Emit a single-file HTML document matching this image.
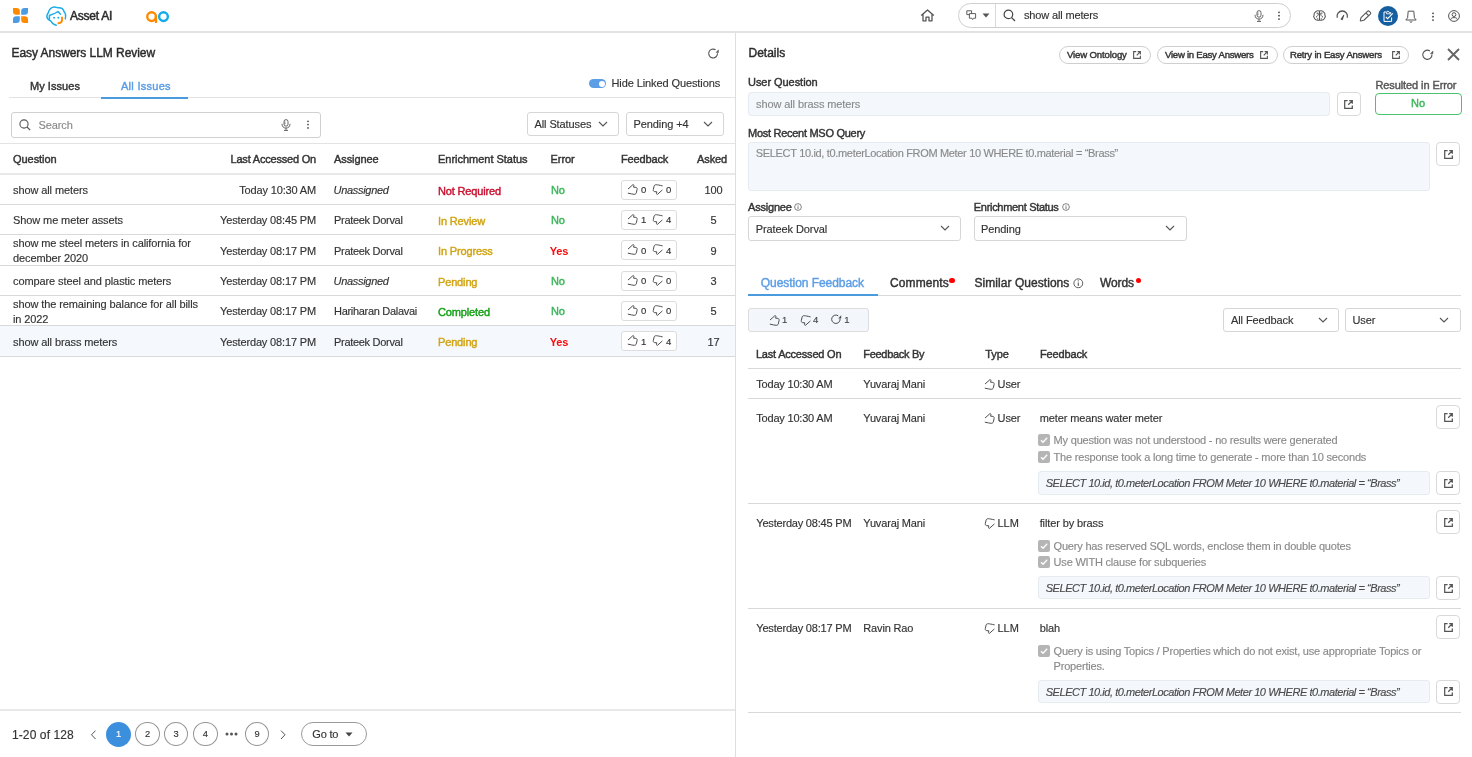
<!DOCTYPE html><html><head><meta charset="utf-8"><style>
html,body{margin:0;padding:0;}
body{width:1472px;height:757px;overflow:hidden;position:relative;background:#fff;font-family:"Liberation Sans",sans-serif;}
.a{position:absolute;}
.t{position:absolute;white-space:nowrap;}
svg.a{overflow:visible;}
#w{position:absolute;left:0;top:0;width:1472px;height:757px;will-change:transform;background:#fff;}
</style></head><body><div id="w">
<svg class="a" style="left:12px;top:7px;" width="17" height="17" viewBox="0 0 17 17" fill="none"><path d="M1 1 H4.5 A3.3 3.3 0 0 1 7.8 4.3 V7.8 H4.3 A3.3 3.3 0 0 1 1 4.5 Z" fill="#ff8a00"/>
<path d="M16 1 H12.5 A3.3 3.3 0 0 0 9.2 4.3 V7.8 H12.7 A3.3 3.3 0 0 0 16 4.5 Z" fill="#4b9ce2"/>
<path d="M1 16 H4.5 A3.3 3.3 0 0 0 7.8 12.7 V9.2 H4.3 A3.3 3.3 0 0 0 1 12.5 Z" fill="#4b9ce2"/>
<path d="M16 16 H12.5 A3.3 3.3 0 0 1 9.2 12.7 V9.2 H12.7 A3.3 3.3 0 0 1 16 12.5 Z" fill="#ff8a00"/></svg>
<svg class="a" style="left:46px;top:6px;" width="20" height="20" viewBox="0 0 20 20" fill="none"><path d="M10.2 19.3 C7.5 18.6 5.8 17 5 15.2 C3.4 14.4 1 13 0.9 10.6 C0.9 8.8 1.4 7.5 2.4 6.6 C2.6 4.6 4.5 1.3 8 0.9 C9.5 0.8 10.8 1.4 11.9 1.8 C14.5 1.6 17.4 2.8 18 5.6 C19.6 7 20 9.5 19.3 12.8" stroke="#1aaeea" stroke-width="1.5" stroke-linecap="round" stroke-linejoin="round"/>
<path d="M3.4 9.4 V13.6 M3.4 9.4 C6.5 8.3 9.5 7.4 12 5.5 L14.3 8.1" stroke="#1aaeea" stroke-width="1.5" stroke-linecap="round" stroke-linejoin="round"/>
<circle cx="8.1" cy="11.7" r="0.95" fill="#1aaeea"/><circle cx="12.3" cy="11.7" r="0.95" fill="#1aaeea"/>
<path d="M16 11.5 V14.2 C16 15.8 14.6 17 12.4 17.2" stroke="#ff8a00" stroke-width="1.9" stroke-linecap="round"/></svg>
<div class="t" style="left:70px;top:9.84px;font-size:12px;line-height:12px;color:#2b2b2b;-webkit-text-stroke:0.42px currentColor;letter-spacing:-0.25px;-webkit-text-stroke:0.5px currentColor;">Asset AI</div>
<svg class="a" style="left:145px;top:10px;" width="26" height="14" viewBox="0 0 26 14" fill="none"><circle cx="6.6" cy="6.6" r="4.35" stroke="#ff8a00" stroke-width="2.4"/><path d="M10.95 6.6 V11.9" stroke="#ff8a00" stroke-width="2.4" stroke-linecap="round"/>
<circle cx="18.5" cy="6.6" r="4.35" stroke="#14abeb" stroke-width="2.4"/></svg>
<svg class="a" style="left:920px;top:9px;" width="15" height="13" viewBox="0 0 15 13" fill="none"><path d="M1.2 6.6 L7.5 1 L13.8 6.6 M3 5.2 V11.8 H6 V8.2 H9 V11.8 H12 V5.2" stroke="#555" stroke-width="1.3" stroke-linejoin="round"/></svg>
<div class="a" style="left:958px;top:3px;width:333px;height:25px;border:1px solid #cfcfcf;border-radius:13px;box-sizing:border-box;background:#fff;"></div>
<div class="a" style="left:995px;top:4px;width:1px;height:23px;background:#d9d9d9;"></div>
<svg class="a" style="left:966px;top:10px;" width="11" height="11" viewBox="0 0 11 11" fill="none"><path d="M0.8 0.8 H5.6 V4 M0.8 0.8 V4.6 H3.4 M3.4 3.6 H9.6 V8.2 H7.6 L6.6 9.6 L5.8 8.2 H3.4 Z" stroke="#555" stroke-width="0.95" stroke-linejoin="round"/></svg>
<svg class="a" style="left:982px;top:13px;" width="8" height="5" viewBox="0 0 8 5" fill="none"><path d="M0.5 0.5 H7.5 L4 4.5 Z" fill="#555"/></svg>
<svg class="a" style="left:1003px;top:9px;" width="13" height="13" viewBox="0 0 13 13" fill="none"><circle cx="5.4" cy="5.4" r="4.3" stroke="#444" stroke-width="1.2"/><path d="M8.6 8.6 L12 12" stroke="#444" stroke-width="1.3"/></svg>
<div class="t" style="left:1024px;top:10.29px;font-size:11px;line-height:11px;color:#333;-webkit-text-stroke:0.15px currentColor;letter-spacing:-0.15px;">show all meters</div>
<svg class="a" style="left:1254px;top:10px;" width="10" height="12" viewBox="0 0 10 12" fill="none"><rect x="3" y="0.6" width="4" height="6.6" rx="2" stroke="#555" stroke-width="0.9"/><path d="M1 4.8 C1 8 2.8 9 5 9 C7.2 9 9 8 9 4.8 M5 9 V11.4 M3 11.4 H7" stroke="#555" stroke-width="0.9"/><path d="M3.2 3 H4.6 M3.2 4.6 H4.6" stroke="#555" stroke-width="0.7"/></svg>
<svg class="a" style="left:1277px;top:11.2px;" width="4" height="9" viewBox="0 0 4 9" fill="none"><circle cx="2" cy="1.3" r="0.9" fill="#444"/><circle cx="2" cy="4.7" r="0.9" fill="#444"/><circle cx="2" cy="8.1" r="0.9" fill="#444"/></svg>
<svg class="a" style="left:1312.8px;top:9.6px;" width="13" height="11.3" viewBox="0 0 15 13" fill="none"><path d="M7.5 1.2 C5.5 0.6 3.6 1 2.6 2.4 C1.4 3.2 1 4.6 1.3 6 C0.6 6.8 0.7 8.4 1.6 9.4 C2.2 11.2 3.8 12 5.6 11.8 L7.5 11.8 L9.4 11.8 C11.2 12 12.8 11.2 13.4 9.4 C14.3 8.4 14.4 6.8 13.7 6 C14 4.6 13.6 3.2 12.4 2.4 C11.4 1 9.5 0.6 7.5 1.2 Z M7.5 1.2 V11.8" stroke="#555" stroke-width="1.25"/>
<path d="M4 3.6 H6 V6.2 M4.2 8.6 C3.6 7.6 4.2 6.6 5.4 6.6 M11 3.6 H9 V6.2 M10.8 8.6 C11.4 7.6 10.8 6.6 9.6 6.6 M5.4 9.6 V11 M9.6 9.6 V11" stroke="#555" stroke-width="1.15"/></svg>
<svg class="a" style="left:1336px;top:10px;" width="13" height="11" viewBox="0 0 13 11" fill="none"><path d="M1.3 7.8 A5.2 5.2 0 1 1 11.2 7.8" stroke="#555" stroke-width="1.3"/><path d="M4.9 9.2 L7.9 4.9 L6.4 9.8 Z" fill="#444" stroke="#444" stroke-width="0.7" stroke-linejoin="round"/></svg>
<svg class="a" style="left:1358.6px;top:9.6px;" width="12.6" height="11.7" viewBox="0 0 14 13" fill="none"><path d="M1.4 11.8 L2.2 8.6 L9.4 1.4 C10 0.8 10.8 0.8 11.4 1.4 L12.6 2.6 C13.2 3.2 13.2 4 12.6 4.6 L5.4 11.4 L2 12.2 Z M7.6 3.2 L10.8 6.4" stroke="#555" stroke-width="1.2" stroke-linejoin="round"/></svg>
<div class="a" style="left:1378px;top:5.5px;width:20px;height:20px;background:#155e9f;border-radius:50%;"></div>
<svg class="a" style="left:1383px;top:9.5px;" width="11" height="12" viewBox="0 0 11 12" fill="none"><path d="M3.6 2 H1 V11.4 H8.6 V7.5" stroke="#fff" stroke-width="1"/><path d="M3.6 2.6 C3.6 0.8 6.2 0.8 6.2 2.6 H7.8 V3.8 H3.6 Z" stroke="#fff" stroke-width="0.9"/><path d="M2.8 6.8 L4.6 8.6 L9.8 3.4" stroke="#fff" stroke-width="1.1"/></svg>
<svg class="a" style="left:1405px;top:10px;" width="12" height="13" viewBox="0 0 12 13" fill="none"><path d="M3.2 1.2 H8.8 L9.4 7.8 L11.2 10 H0.8 L2.6 7.8 Z M4.6 11.4 L6 12.4 L7.4 11.4" stroke="#555" stroke-width="1" stroke-linejoin="round"/></svg>
<svg class="a" style="left:1431px;top:11.5px;" width="4" height="9" viewBox="0 0 4 9" fill="none"><circle cx="2" cy="1.3" r="0.9" fill="#444"/><circle cx="2" cy="4.7" r="0.9" fill="#444"/><circle cx="2" cy="8.1" r="0.9" fill="#444"/></svg>
<svg class="a" style="left:1448px;top:9.5px;" width="12" height="12" viewBox="0 0 12 12" fill="none"><circle cx="6" cy="6" r="5.4" stroke="#555" stroke-width="1"/><circle cx="6" cy="4.6" r="1.9" stroke="#555" stroke-width="1"/><path d="M2.6 9.8 C3 8 4.2 7.6 6 7.6 C7.8 7.6 9 8 9.4 9.8" stroke="#555" stroke-width="1"/></svg>
<div class="a" style="left:0px;top:31px;width:1472px;height:2px;background:#e2e2e2;"></div>
<div class="a" style="left:735px;top:33px;width:1px;height:724px;background:#dedede;"></div>
<div class="t" style="left:11.5px;top:47.34px;font-size:12px;line-height:12px;color:#2b2b2b;-webkit-text-stroke:0.42px currentColor;letter-spacing:-0.05px;">Easy Answers LLM Review</div>
<svg class="a" style="left:708px;top:48px;" width="11" height="11" viewBox="0 0 11 11" fill="none"><path d="M7.6 1.9 A4.4 4.4 0 1 0 9.5 5.2" stroke="#555" stroke-width="1.1"/><path d="M10.5 1.8 V4.5 H8 Z" fill="#555" stroke="#555" stroke-width="0.4" stroke-linejoin="round"/></svg>
<div class="t" style="left:30px;top:80.79px;font-size:11px;line-height:11px;color:#333;-webkit-text-stroke:0.42px currentColor;letter-spacing:0.05px;">My Issues</div>
<div class="t" style="left:121px;top:80.79px;font-size:11px;line-height:11px;color:#5b9de6;-webkit-text-stroke:0.42px currentColor;letter-spacing:0.28px;">All Issues</div>
<div class="a" style="left:9px;top:97px;width:726px;height:1px;background:#e3e3e3;"></div>
<div class="a" style="left:101px;top:97px;width:87px;height:2px;background:#4a9bde;"></div>
<div class="a" style="left:589px;top:79px;width:17px;height:9px;background:#5b9ee6;border-radius:5px;"></div>
<div class="a" style="left:598.5px;top:80.5px;width:6px;height:6px;background:#fff;border-radius:50%;"></div>
<div class="t" style="left:611.5px;top:78.39px;font-size:11px;line-height:11px;color:#333;-webkit-text-stroke:0.15px currentColor;letter-spacing:-0.1px;">Hide Linked Questions</div>
<div class="a" style="left:11px;top:112px;width:310px;height:26px;border:1px solid #d0d0d0;border-radius:3px;box-sizing:border-box;"></div>
<svg class="a" style="left:19px;top:118.5px;" width="12" height="12" viewBox="0 0 12 12" fill="none"><circle cx="5" cy="5" r="4.1" stroke="#555" stroke-width="1.1"/><path d="M8 8 L11.2 11.2" stroke="#555" stroke-width="1.2"/></svg>
<div class="t" style="left:38.5px;top:120.19px;font-size:11px;line-height:11px;color:#8a8a8a;-webkit-text-stroke:0.15px currentColor;letter-spacing:-0.1px;">Search</div>
<svg class="a" style="left:281px;top:119px;" width="10" height="12" viewBox="0 0 10 12" fill="none"><rect x="3" y="0.6" width="4" height="6.6" rx="2" stroke="#555" stroke-width="0.9"/><path d="M1 4.8 C1 8 2.8 9 5 9 C7.2 9 9 8 9 4.8 M5 9 V11.4 M3 11.4 H7" stroke="#555" stroke-width="0.9"/><path d="M3.2 3 H4.6 M3.2 4.6 H4.6" stroke="#555" stroke-width="0.7"/></svg>
<svg class="a" style="left:305.5px;top:120px;" width="4" height="9" viewBox="0 0 4 9" fill="none"><circle cx="2" cy="1.3" r="0.85" fill="#444"/><circle cx="2" cy="4.6" r="0.85" fill="#444"/><circle cx="2" cy="7.9" r="0.85" fill="#444"/></svg>
<div class="a" style="left:527px;top:112px;width:92px;height:24px;border:1px solid #d6d6d6;border-radius:3px;box-sizing:border-box;background:#fff;"></div>
<div class="t" style="left:534.5px;top:119.19px;font-size:11px;line-height:11px;color:#333;-webkit-text-stroke:0.15px currentColor;letter-spacing:-0.1px;">All Statuses</div>
<svg class="a" style="left:598px;top:121.0px;" width="10" height="6" viewBox="0 0 10 6" fill="none"><path d="M1 1 L5 5 L9 1" stroke="#555" stroke-width="1.1"/></svg>
<div class="a" style="left:625.5px;top:112px;width:98px;height:24px;border:1px solid #d6d6d6;border-radius:3px;box-sizing:border-box;background:#fff;"></div>
<div class="t" style="left:633.5px;top:119.19px;font-size:11px;line-height:11px;color:#333;-webkit-text-stroke:0.15px currentColor;letter-spacing:-0.1px;">Pending +4</div>
<svg class="a" style="left:702.5px;top:121.0px;" width="10" height="6" viewBox="0 0 10 6" fill="none"><path d="M1 1 L5 5 L9 1" stroke="#555" stroke-width="1.1"/></svg>
<div class="a" style="left:0px;top:143px;width:735px;height:1px;background:#e3e3e3;"></div>
<div class="t" style="left:13px;top:154.49px;font-size:11px;line-height:11px;color:#333;-webkit-text-stroke:0.42px currentColor;letter-spacing:-0.05px;">Question</div>
<div class="t" style="right:1156px;top:154.49px;font-size:11px;line-height:11px;color:#333;-webkit-text-stroke:0.42px currentColor;letter-spacing:-0.2px;">Last Accessed On</div>
<div class="t" style="left:334px;top:154.49px;font-size:11px;line-height:11px;color:#333;-webkit-text-stroke:0.42px currentColor;letter-spacing:-0.1px;">Assignee</div>
<div class="t" style="left:438px;top:154.49px;font-size:11px;line-height:11px;color:#333;-webkit-text-stroke:0.42px currentColor;letter-spacing:-0.02px;">Enrichment  Status</div>
<div class="t" style="left:550.5px;top:154.49px;font-size:11px;line-height:11px;color:#333;-webkit-text-stroke:0.42px currentColor;letter-spacing:-0.05px;">Error</div>
<div class="t" style="left:621px;top:154.49px;font-size:11px;line-height:11px;color:#333;-webkit-text-stroke:0.42px currentColor;letter-spacing:-0.15px;">Feedback</div>
<div class="t" style="left:697px;top:154.49px;font-size:11px;line-height:11px;color:#333;-webkit-text-stroke:0.42px currentColor;letter-spacing:-0.1px;">Asked</div>
<div class="a" style="left:0px;top:173px;width:735px;height:2px;background:#e8e8e8;"></div>
<div class="a" style="left:0px;top:326px;width:735px;height:30px;background:#f5f8fc;"></div>
<div class="t" style="left:13px;top:185.09px;font-size:11px;line-height:11px;color:#333;-webkit-text-stroke:0.15px currentColor;letter-spacing:-0.1px;">show all meters</div>
<div class="t" style="right:1156px;top:185.09px;font-size:11px;line-height:11px;color:#333;-webkit-text-stroke:0.15px currentColor;letter-spacing:-0.15px;">Today 10:30 AM</div>
<div class="t" style="left:333.5px;top:185.09px;font-size:11px;line-height:11px;color:#333;-webkit-text-stroke:0.15px currentColor;font-style:italic;letter-spacing:-0.3px;">Unassigned</div>
<div class="t" style="left:438px;top:185.59px;font-size:11px;line-height:11px;color:#c8102e;-webkit-text-stroke:0.42px currentColor;letter-spacing:-0.15px;">Not Required</div>
<div class="t" style="left:551px;top:184.69px;font-size:11px;line-height:11px;color:#3bb55a;-webkit-text-stroke:0.42px currentColor;letter-spacing:-0.1px;">No</div>
<div class="a" style="left:621px;top:179.5px;width:56px;height:20px;border:1px solid #dcdcdc;border-radius:3px;box-sizing:border-box;background:#fff;"></div>
<svg class="a" style="left:628px;top:183.9px;" width="10" height="11" viewBox="0 0 10 11" fill="none"><path d="M0.3 4.8 L4.9 0.7 C5.6 0.5 6 1 5.9 1.7 L5.6 3.2 L7.9 3.4 C8.9 3.6 9.3 4.4 9.1 5.4 L8.3 8.9 C8 9.9 7.1 10.4 6.1 10.3 C4.6 10.1 3.2 9.9 0.2 9.2" stroke="#444" stroke-width="0.95" stroke-linecap="round" stroke-linejoin="round"/></svg>
<div class="t" style="left:641px;top:185.06px;font-size:9.5px;line-height:9.5px;color:#333;-webkit-text-stroke:0.15px currentColor;">0</div>
<svg class="a" style="left:653.4px;top:183.9px;" width="10" height="11" viewBox="0 0 10 11" fill="none"><path transform="rotate(180 4.7 5.5)" d="M0.3 4.8 L4.9 0.7 C5.6 0.5 6 1 5.9 1.7 L5.6 3.2 L7.9 3.4 C8.9 3.6 9.3 4.4 9.1 5.4 L8.3 8.9 C8 9.9 7.1 10.4 6.1 10.3 C4.6 10.1 3.2 9.9 0.2 9.2" stroke="#444" stroke-width="0.95" stroke-linecap="round" stroke-linejoin="round"/></svg>
<div class="t" style="left:666px;top:185.06px;font-size:9.5px;line-height:9.5px;color:#333;-webkit-text-stroke:0.15px currentColor;">0</div>
<div class="t" style="left:513.5px;width:400px;text-align:center;top:185.09px;font-size:11px;line-height:11px;color:#333;-webkit-text-stroke:0.15px currentColor;letter-spacing:-0.1px;">100</div>
<div class="a" style="left:0px;top:204px;width:735px;height:1px;background:#d9d9d9;"></div>
<div class="t" style="left:13px;top:215.09px;font-size:11px;line-height:11px;color:#333;-webkit-text-stroke:0.15px currentColor;letter-spacing:-0.1px;">Show me meter assets</div>
<div class="t" style="right:1156px;top:215.09px;font-size:11px;line-height:11px;color:#333;-webkit-text-stroke:0.15px currentColor;letter-spacing:-0.15px;">Yesterday 08:45 PM</div>
<div class="t" style="left:334px;top:215.09px;font-size:11px;line-height:11px;color:#333;-webkit-text-stroke:0.15px currentColor;letter-spacing:-0.3px;">Prateek Dorval</div>
<div class="t" style="left:438px;top:215.59px;font-size:11px;line-height:11px;color:#d1a414;-webkit-text-stroke:0.42px currentColor;letter-spacing:-0.15px;">In Review</div>
<div class="t" style="left:551px;top:214.69px;font-size:11px;line-height:11px;color:#3bb55a;-webkit-text-stroke:0.42px currentColor;letter-spacing:-0.1px;">No</div>
<div class="a" style="left:621px;top:209.5px;width:56px;height:20px;border:1px solid #dcdcdc;border-radius:3px;box-sizing:border-box;background:#fff;"></div>
<svg class="a" style="left:628px;top:213.9px;" width="10" height="11" viewBox="0 0 10 11" fill="none"><path d="M0.3 4.8 L4.9 0.7 C5.6 0.5 6 1 5.9 1.7 L5.6 3.2 L7.9 3.4 C8.9 3.6 9.3 4.4 9.1 5.4 L8.3 8.9 C8 9.9 7.1 10.4 6.1 10.3 C4.6 10.1 3.2 9.9 0.2 9.2" stroke="#444" stroke-width="0.95" stroke-linecap="round" stroke-linejoin="round"/></svg>
<div class="t" style="left:641px;top:215.06px;font-size:9.5px;line-height:9.5px;color:#333;-webkit-text-stroke:0.15px currentColor;">1</div>
<svg class="a" style="left:653.4px;top:213.9px;" width="10" height="11" viewBox="0 0 10 11" fill="none"><path transform="rotate(180 4.7 5.5)" d="M0.3 4.8 L4.9 0.7 C5.6 0.5 6 1 5.9 1.7 L5.6 3.2 L7.9 3.4 C8.9 3.6 9.3 4.4 9.1 5.4 L8.3 8.9 C8 9.9 7.1 10.4 6.1 10.3 C4.6 10.1 3.2 9.9 0.2 9.2" stroke="#444" stroke-width="0.95" stroke-linecap="round" stroke-linejoin="round"/></svg>
<div class="t" style="left:666px;top:215.06px;font-size:9.5px;line-height:9.5px;color:#333;-webkit-text-stroke:0.15px currentColor;">4</div>
<div class="t" style="left:513.5px;width:400px;text-align:center;top:215.09px;font-size:11px;line-height:11px;color:#333;-webkit-text-stroke:0.15px currentColor;letter-spacing:-0.1px;">5</div>
<div class="a" style="left:0px;top:234px;width:735px;height:1px;background:#d9d9d9;"></div>
<div class="t" style="left:13px;top:238.09px;font-size:11px;line-height:11px;color:#333;-webkit-text-stroke:0.15px currentColor;letter-spacing:-0.1px;">show me steel meters in california for</div>
<div class="t" style="left:13px;top:253.09px;font-size:11px;line-height:11px;color:#333;-webkit-text-stroke:0.15px currentColor;letter-spacing:-0.1px;">december 2020</div>
<div class="t" style="right:1156px;top:245.59px;font-size:11px;line-height:11px;color:#333;-webkit-text-stroke:0.15px currentColor;letter-spacing:-0.15px;">Yesterday 08:17 PM</div>
<div class="t" style="left:334px;top:245.59px;font-size:11px;line-height:11px;color:#333;-webkit-text-stroke:0.15px currentColor;letter-spacing:-0.3px;">Prateek Dorval</div>
<div class="t" style="left:438px;top:246.09px;font-size:11px;line-height:11px;color:#d1a414;-webkit-text-stroke:0.42px currentColor;letter-spacing:-0.15px;">In Progress</div>
<div class="t" style="left:549.7px;top:246.39px;font-size:11px;line-height:11px;color:#fa0a0a;font-weight:700;letter-spacing:-0.1px;">Yes</div>
<div class="a" style="left:621px;top:240.0px;width:56px;height:20px;border:1px solid #dcdcdc;border-radius:3px;box-sizing:border-box;background:#fff;"></div>
<svg class="a" style="left:628px;top:244.4px;" width="10" height="11" viewBox="0 0 10 11" fill="none"><path d="M0.3 4.8 L4.9 0.7 C5.6 0.5 6 1 5.9 1.7 L5.6 3.2 L7.9 3.4 C8.9 3.6 9.3 4.4 9.1 5.4 L8.3 8.9 C8 9.9 7.1 10.4 6.1 10.3 C4.6 10.1 3.2 9.9 0.2 9.2" stroke="#444" stroke-width="0.95" stroke-linecap="round" stroke-linejoin="round"/></svg>
<div class="t" style="left:641px;top:245.56px;font-size:9.5px;line-height:9.5px;color:#333;-webkit-text-stroke:0.15px currentColor;">0</div>
<svg class="a" style="left:653.4px;top:244.4px;" width="10" height="11" viewBox="0 0 10 11" fill="none"><path transform="rotate(180 4.7 5.5)" d="M0.3 4.8 L4.9 0.7 C5.6 0.5 6 1 5.9 1.7 L5.6 3.2 L7.9 3.4 C8.9 3.6 9.3 4.4 9.1 5.4 L8.3 8.9 C8 9.9 7.1 10.4 6.1 10.3 C4.6 10.1 3.2 9.9 0.2 9.2" stroke="#444" stroke-width="0.95" stroke-linecap="round" stroke-linejoin="round"/></svg>
<div class="t" style="left:666px;top:245.56px;font-size:9.5px;line-height:9.5px;color:#333;-webkit-text-stroke:0.15px currentColor;">4</div>
<div class="t" style="left:513.5px;width:400px;text-align:center;top:245.59px;font-size:11px;line-height:11px;color:#333;-webkit-text-stroke:0.15px currentColor;letter-spacing:-0.1px;">9</div>
<div class="a" style="left:0px;top:265px;width:735px;height:1px;background:#d9d9d9;"></div>
<div class="t" style="left:13px;top:276.09px;font-size:11px;line-height:11px;color:#333;-webkit-text-stroke:0.15px currentColor;letter-spacing:-0.1px;">compare steel and plastic meters</div>
<div class="t" style="right:1156px;top:276.09px;font-size:11px;line-height:11px;color:#333;-webkit-text-stroke:0.15px currentColor;letter-spacing:-0.15px;">Yesterday 08:17 PM</div>
<div class="t" style="left:333.5px;top:276.09px;font-size:11px;line-height:11px;color:#333;-webkit-text-stroke:0.15px currentColor;font-style:italic;letter-spacing:-0.3px;">Unassigned</div>
<div class="t" style="left:438px;top:276.59px;font-size:11px;line-height:11px;color:#d1a414;-webkit-text-stroke:0.42px currentColor;letter-spacing:-0.15px;">Pending</div>
<div class="t" style="left:551px;top:275.69px;font-size:11px;line-height:11px;color:#3bb55a;-webkit-text-stroke:0.42px currentColor;letter-spacing:-0.1px;">No</div>
<div class="a" style="left:621px;top:270.5px;width:56px;height:20px;border:1px solid #dcdcdc;border-radius:3px;box-sizing:border-box;background:#fff;"></div>
<svg class="a" style="left:628px;top:274.9px;" width="10" height="11" viewBox="0 0 10 11" fill="none"><path d="M0.3 4.8 L4.9 0.7 C5.6 0.5 6 1 5.9 1.7 L5.6 3.2 L7.9 3.4 C8.9 3.6 9.3 4.4 9.1 5.4 L8.3 8.9 C8 9.9 7.1 10.4 6.1 10.3 C4.6 10.1 3.2 9.9 0.2 9.2" stroke="#444" stroke-width="0.95" stroke-linecap="round" stroke-linejoin="round"/></svg>
<div class="t" style="left:641px;top:276.06px;font-size:9.5px;line-height:9.5px;color:#333;-webkit-text-stroke:0.15px currentColor;">0</div>
<svg class="a" style="left:653.4px;top:274.9px;" width="10" height="11" viewBox="0 0 10 11" fill="none"><path transform="rotate(180 4.7 5.5)" d="M0.3 4.8 L4.9 0.7 C5.6 0.5 6 1 5.9 1.7 L5.6 3.2 L7.9 3.4 C8.9 3.6 9.3 4.4 9.1 5.4 L8.3 8.9 C8 9.9 7.1 10.4 6.1 10.3 C4.6 10.1 3.2 9.9 0.2 9.2" stroke="#444" stroke-width="0.95" stroke-linecap="round" stroke-linejoin="round"/></svg>
<div class="t" style="left:666px;top:276.06px;font-size:9.5px;line-height:9.5px;color:#333;-webkit-text-stroke:0.15px currentColor;">0</div>
<div class="t" style="left:513.5px;width:400px;text-align:center;top:276.09px;font-size:11px;line-height:11px;color:#333;-webkit-text-stroke:0.15px currentColor;letter-spacing:-0.1px;">3</div>
<div class="a" style="left:0px;top:295px;width:735px;height:1px;background:#d9d9d9;"></div>
<div class="t" style="left:13px;top:298.59px;font-size:11px;line-height:11px;color:#333;-webkit-text-stroke:0.15px currentColor;letter-spacing:-0.1px;">show the remaining balance for all bills</div>
<div class="t" style="left:13px;top:313.59px;font-size:11px;line-height:11px;color:#333;-webkit-text-stroke:0.15px currentColor;letter-spacing:-0.1px;">in 2022</div>
<div class="t" style="right:1156px;top:306.09px;font-size:11px;line-height:11px;color:#333;-webkit-text-stroke:0.15px currentColor;letter-spacing:-0.15px;">Yesterday 08:17 PM</div>
<div class="t" style="left:334px;top:306.09px;font-size:11px;line-height:11px;color:#333;-webkit-text-stroke:0.15px currentColor;letter-spacing:-0.3px;">Hariharan Dalavai</div>
<div class="t" style="left:438px;top:306.59px;font-size:11px;line-height:11px;color:#14a014;-webkit-text-stroke:0.42px currentColor;letter-spacing:-0.15px;">Completed</div>
<div class="t" style="left:551px;top:305.69px;font-size:11px;line-height:11px;color:#3bb55a;-webkit-text-stroke:0.42px currentColor;letter-spacing:-0.1px;">No</div>
<div class="a" style="left:621px;top:300.5px;width:56px;height:20px;border:1px solid #dcdcdc;border-radius:3px;box-sizing:border-box;background:#fff;"></div>
<svg class="a" style="left:628px;top:304.9px;" width="10" height="11" viewBox="0 0 10 11" fill="none"><path d="M0.3 4.8 L4.9 0.7 C5.6 0.5 6 1 5.9 1.7 L5.6 3.2 L7.9 3.4 C8.9 3.6 9.3 4.4 9.1 5.4 L8.3 8.9 C8 9.9 7.1 10.4 6.1 10.3 C4.6 10.1 3.2 9.9 0.2 9.2" stroke="#444" stroke-width="0.95" stroke-linecap="round" stroke-linejoin="round"/></svg>
<div class="t" style="left:641px;top:306.06px;font-size:9.5px;line-height:9.5px;color:#333;-webkit-text-stroke:0.15px currentColor;">0</div>
<svg class="a" style="left:653.4px;top:304.9px;" width="10" height="11" viewBox="0 0 10 11" fill="none"><path transform="rotate(180 4.7 5.5)" d="M0.3 4.8 L4.9 0.7 C5.6 0.5 6 1 5.9 1.7 L5.6 3.2 L7.9 3.4 C8.9 3.6 9.3 4.4 9.1 5.4 L8.3 8.9 C8 9.9 7.1 10.4 6.1 10.3 C4.6 10.1 3.2 9.9 0.2 9.2" stroke="#444" stroke-width="0.95" stroke-linecap="round" stroke-linejoin="round"/></svg>
<div class="t" style="left:666px;top:306.06px;font-size:9.5px;line-height:9.5px;color:#333;-webkit-text-stroke:0.15px currentColor;">0</div>
<div class="t" style="left:513.5px;width:400px;text-align:center;top:306.09px;font-size:11px;line-height:11px;color:#333;-webkit-text-stroke:0.15px currentColor;letter-spacing:-0.1px;">5</div>
<div class="a" style="left:0px;top:325px;width:735px;height:1px;background:#d9d9d9;"></div>
<div class="t" style="left:13px;top:336.59px;font-size:11px;line-height:11px;color:#333;-webkit-text-stroke:0.15px currentColor;letter-spacing:-0.1px;">show all brass meters</div>
<div class="t" style="right:1156px;top:336.59px;font-size:11px;line-height:11px;color:#333;-webkit-text-stroke:0.15px currentColor;letter-spacing:-0.15px;">Yesterday 08:17 PM</div>
<div class="t" style="left:334px;top:336.59px;font-size:11px;line-height:11px;color:#333;-webkit-text-stroke:0.15px currentColor;letter-spacing:-0.3px;">Prateek Dorval</div>
<div class="t" style="left:438px;top:337.09px;font-size:11px;line-height:11px;color:#d1a414;-webkit-text-stroke:0.42px currentColor;letter-spacing:-0.15px;">Pending</div>
<div class="t" style="left:549.7px;top:337.39px;font-size:11px;line-height:11px;color:#fa0a0a;font-weight:700;letter-spacing:-0.1px;">Yes</div>
<div class="a" style="left:621px;top:331.0px;width:56px;height:20px;border:1px solid #dcdcdc;border-radius:3px;box-sizing:border-box;background:#fff;"></div>
<svg class="a" style="left:628px;top:335.4px;" width="10" height="11" viewBox="0 0 10 11" fill="none"><path d="M0.3 4.8 L4.9 0.7 C5.6 0.5 6 1 5.9 1.7 L5.6 3.2 L7.9 3.4 C8.9 3.6 9.3 4.4 9.1 5.4 L8.3 8.9 C8 9.9 7.1 10.4 6.1 10.3 C4.6 10.1 3.2 9.9 0.2 9.2" stroke="#444" stroke-width="0.95" stroke-linecap="round" stroke-linejoin="round"/></svg>
<div class="t" style="left:641px;top:336.56px;font-size:9.5px;line-height:9.5px;color:#333;-webkit-text-stroke:0.15px currentColor;">1</div>
<svg class="a" style="left:653.4px;top:335.4px;" width="10" height="11" viewBox="0 0 10 11" fill="none"><path transform="rotate(180 4.7 5.5)" d="M0.3 4.8 L4.9 0.7 C5.6 0.5 6 1 5.9 1.7 L5.6 3.2 L7.9 3.4 C8.9 3.6 9.3 4.4 9.1 5.4 L8.3 8.9 C8 9.9 7.1 10.4 6.1 10.3 C4.6 10.1 3.2 9.9 0.2 9.2" stroke="#444" stroke-width="0.95" stroke-linecap="round" stroke-linejoin="round"/></svg>
<div class="t" style="left:666px;top:336.56px;font-size:9.5px;line-height:9.5px;color:#333;-webkit-text-stroke:0.15px currentColor;">4</div>
<div class="t" style="left:513.5px;width:400px;text-align:center;top:336.59px;font-size:11px;line-height:11px;color:#333;-webkit-text-stroke:0.15px currentColor;letter-spacing:-0.1px;">17</div>
<div class="a" style="left:0px;top:356px;width:735px;height:1px;background:#d9d9d9;"></div>
<div class="a" style="left:0px;top:709px;width:735px;height:2px;background:#e8e8e8;"></div>
<div class="t" style="left:12px;top:728.54px;font-size:12px;line-height:12px;color:#333;-webkit-text-stroke:0.15px currentColor;letter-spacing:0.1px;">1-20 of 128</div>
<svg class="a" style="left:90px;top:729.5px;" width="7" height="10" viewBox="0 0 7 10" fill="none"><path d="M5.5 0.6 L1.5 4.8 L5.5 9" stroke="#555" stroke-width="1"/></svg>
<div class="a" style="left:106px;top:721.5px;width:25px;height:25px;background:#3b8fdd;border-radius:50%;"></div>
<div class="t" style="left:-81.5px;width:400px;text-align:center;top:729.53px;font-size:9.3px;line-height:9.3px;color:#fff;-webkit-text-stroke:0.15px currentColor;">1</div>
<div class="a" style="left:135.2px;top:721.6px;width:24.6px;height:24.4px;border:1px solid #959595;border-radius:50%;box-sizing:border-box;"></div>
<div class="t" style="left:-52.5px;width:400px;text-align:center;top:729.53px;font-size:9.3px;line-height:9.3px;color:#333;-webkit-text-stroke:0.15px currentColor;">2</div>
<div class="a" style="left:163.7px;top:721.6px;width:24.6px;height:24.4px;border:1px solid #959595;border-radius:50%;box-sizing:border-box;"></div>
<div class="t" style="left:-24px;width:400px;text-align:center;top:729.53px;font-size:9.3px;line-height:9.3px;color:#333;-webkit-text-stroke:0.15px currentColor;">3</div>
<div class="a" style="left:193.0px;top:721.6px;width:24.6px;height:24.4px;border:1px solid #959595;border-radius:50%;box-sizing:border-box;"></div>
<div class="t" style="left:5.300000000000011px;width:400px;text-align:center;top:729.53px;font-size:9.3px;line-height:9.3px;color:#333;-webkit-text-stroke:0.15px currentColor;">4</div>
<div class="a" style="left:244.7px;top:721.6px;width:24.6px;height:24.4px;border:1px solid #959595;border-radius:50%;box-sizing:border-box;"></div>
<div class="t" style="left:57px;width:400px;text-align:center;top:729.53px;font-size:9.3px;line-height:9.3px;color:#333;-webkit-text-stroke:0.15px currentColor;">9</div>
<svg class="a" style="left:225px;top:731.5px;" width="13" height="4" viewBox="0 0 13 4" fill="none"><circle cx="2" cy="2" r="1.5" fill="#555"/><circle cx="6.5" cy="2" r="1.5" fill="#555"/><circle cx="11" cy="2" r="1.5" fill="#555"/></svg>
<svg class="a" style="left:280px;top:729.5px;" width="7" height="10" viewBox="0 0 7 10" fill="none"><path d="M1 0.6 L5 4.8 L1 9" stroke="#555" stroke-width="1"/></svg>
<div class="a" style="left:301px;top:721.8px;width:66px;height:24px;border:1px solid #999;border-radius:12px;box-sizing:border-box;"></div>
<div class="t" style="left:312.3px;top:729.39px;font-size:11px;line-height:11px;color:#333;-webkit-text-stroke:0.15px currentColor;letter-spacing:-0.2px;">Go to</div>
<svg class="a" style="left:345px;top:732px;" width="8" height="5" viewBox="0 0 8 5" fill="none"><path d="M0.5 0.5 H7.5 L4 4.5 Z" fill="#444"/></svg>
<div class="t" style="left:748.5px;top:47.14px;font-size:12px;line-height:12px;color:#2b2b2b;-webkit-text-stroke:0.42px currentColor;letter-spacing:0.0px;">Details</div>
<div class="a" style="left:1059px;top:45.5px;width:91.5px;height:18.3px;border:1px solid #cfcfcf;border-radius:10px;box-sizing:border-box;background:#fff;"></div>
<div class="t" style="left:1067px;top:50.47px;font-size:9.6px;line-height:9.6px;color:#333;-webkit-text-stroke:0.42px currentColor;letter-spacing:-0.15px;">View Ontology</div>
<svg class="a" style="left:1133.0px;top:50.5px;" width="8" height="8" viewBox="0 0 9 9" fill="none"><path d="M3.6 0.7 H0.7 V8.3 H8.3 V5.4" stroke="#555" stroke-width="1.24"/><path d="M4.2 4.8 L8 1 M5.2 0.7 H8.3 V3.8" stroke="#555" stroke-width="1.24"/></svg>
<div class="a" style="left:1157px;top:45.5px;width:120.5px;height:18.3px;border:1px solid #cfcfcf;border-radius:10px;box-sizing:border-box;background:#fff;"></div>
<div class="t" style="left:1165px;top:50.47px;font-size:9.6px;line-height:9.6px;color:#333;-webkit-text-stroke:0.42px currentColor;letter-spacing:-0.26px;">View in Easy Answers</div>
<svg class="a" style="left:1260.0px;top:50.5px;" width="8" height="8" viewBox="0 0 9 9" fill="none"><path d="M3.6 0.7 H0.7 V8.3 H8.3 V5.4" stroke="#555" stroke-width="1.24"/><path d="M4.2 4.8 L8 1 M5.2 0.7 H8.3 V3.8" stroke="#555" stroke-width="1.24"/></svg>
<div class="a" style="left:1283px;top:45.5px;width:126px;height:18.3px;border:1px solid #cfcfcf;border-radius:10px;box-sizing:border-box;background:#fff;"></div>
<div class="t" style="left:1290px;top:50.47px;font-size:9.6px;line-height:9.6px;color:#333;-webkit-text-stroke:0.42px currentColor;letter-spacing:-0.2px;">Retry in Easy Answers</div>
<svg class="a" style="left:1391.5px;top:50.5px;" width="8" height="8" viewBox="0 0 9 9" fill="none"><path d="M3.6 0.7 H0.7 V8.3 H8.3 V5.4" stroke="#555" stroke-width="1.24"/><path d="M4.2 4.8 L8 1 M5.2 0.7 H8.3 V3.8" stroke="#555" stroke-width="1.24"/></svg>
<svg class="a" style="left:1422px;top:48.5px;" width="11.5" height="11.5" viewBox="0 0 11 11" fill="none"><path d="M7.6 1.9 A4.4 4.4 0 1 0 9.5 5.2" stroke="#555" stroke-width="1.1"/><path d="M10.5 1.8 V4.5 H8 Z" fill="#555" stroke="#555" stroke-width="0.4" stroke-linejoin="round"/></svg>
<svg class="a" style="left:1447px;top:47.5px;" width="13" height="13" viewBox="0 0 13 13" fill="none"><path d="M1 1 L12 12 M12 1 L1 12" stroke="#666" stroke-width="1.9"/></svg>
<div class="t" style="left:748px;top:77.29px;font-size:11px;line-height:11px;color:#333;-webkit-text-stroke:0.42px currentColor;letter-spacing:-0.05px;">User Question</div>
<div class="t" style="left:1375.5px;top:80.19px;font-size:11px;line-height:11px;color:#555;-webkit-text-stroke:0.42px currentColor;letter-spacing:-0.1px;">Resulted in Error</div>
<div class="a" style="left:748px;top:92px;width:582px;height:24px;background:#f4f8fc;border:1px solid #e6ebf0;border-radius:3px;box-sizing:border-box;"></div>
<div class="t" style="left:756px;top:99.09px;font-size:11px;line-height:11px;color:#8a8a8a;-webkit-text-stroke:0.15px currentColor;letter-spacing:-0.1px;">show all brass meters</div>
<div class="a" style="left:1336.5px;top:92px;width:24.4px;height:24.2px;border:1px solid #d9d9d9;border-radius:4px;box-sizing:border-box;background:#fff;"></div>
<svg class="a" style="left:1344.2px;top:99.6px;" width="9" height="9" viewBox="0 0 9 9" fill="none"><path d="M3.6 0.7 H0.7 V8.3 H8.3 V5.4" stroke="#555" stroke-width="1.25"/><path d="M4.2 4.8 L8 1 M5.2 0.7 H8.3 V3.8" stroke="#555" stroke-width="1.25"/></svg>
<div class="a" style="left:1374.5px;top:93.3px;width:87px;height:21.5px;border:1.5px solid #4cc26e;border-radius:4px;box-sizing:border-box;"></div>
<div class="t" style="left:1218px;width:400px;text-align:center;top:97.99px;font-size:11px;line-height:11px;color:#3bb55a;-webkit-text-stroke:0.42px currentColor;">No</div>
<div class="t" style="left:748px;top:128.19px;font-size:11px;line-height:11px;color:#333;-webkit-text-stroke:0.42px currentColor;letter-spacing:-0.28px;">Most Recent MSO Query</div>
<div class="a" style="left:748px;top:142px;width:682px;height:48.5px;background:#f4f8fc;border:1px solid #e6ebf0;border-radius:3px;box-sizing:border-box;"></div>
<div class="t" style="left:755.8px;top:147.99px;font-size:11px;line-height:11px;color:#8a8a8a;-webkit-text-stroke:0.15px currentColor;letter-spacing:-0.33px;">SELECT 10.id, t0.meterLocation FROM Meter 10 WHERE t0.material = “Brass”</div>
<div class="a" style="left:1436px;top:142px;width:24.4px;height:24.2px;border:1px solid #d9d9d9;border-radius:4px;box-sizing:border-box;background:#fff;"></div>
<svg class="a" style="left:1443.7px;top:149.6px;" width="9" height="9" viewBox="0 0 9 9" fill="none"><path d="M3.6 0.7 H0.7 V8.3 H8.3 V5.4" stroke="#555" stroke-width="1.25"/><path d="M4.2 4.8 L8 1 M5.2 0.7 H8.3 V3.8" stroke="#555" stroke-width="1.25"/></svg>
<div class="t" style="left:748px;top:202.39px;font-size:11px;line-height:11px;color:#333;-webkit-text-stroke:0.42px currentColor;letter-spacing:-0.2px;">Assignee</div>
<svg class="a" style="left:794px;top:203px;" width="8" height="8" viewBox="0 0 10 10" fill="none"><circle cx="5" cy="5" r="4.2" stroke="#555" stroke-width="0.9"/><path d="M5 4.2 V7.6" stroke="#555" stroke-width="1"/><circle cx="5" cy="2.7" r="0.6" fill="#555"/></svg>
<div class="t" style="left:973.8px;top:202.39px;font-size:11px;line-height:11px;color:#333;-webkit-text-stroke:0.42px currentColor;letter-spacing:-0.3px;">Enrichment Status</div>
<svg class="a" style="left:1061.5px;top:203px;" width="8" height="8" viewBox="0 0 10 10" fill="none"><circle cx="5" cy="5" r="4.2" stroke="#555" stroke-width="0.9"/><path d="M5 4.2 V7.6" stroke="#555" stroke-width="1"/><circle cx="5" cy="2.7" r="0.6" fill="#555"/></svg>
<div class="a" style="left:748px;top:216px;width:213px;height:24.5px;border:1px solid #d6d6d6;border-radius:3px;box-sizing:border-box;background:#fff;"></div>
<div class="t" style="left:755.8px;top:223.79px;font-size:11px;line-height:11px;color:#333;-webkit-text-stroke:0.15px currentColor;letter-spacing:-0.1px;">Prateek Dorval</div>
<svg class="a" style="left:939.5px;top:225.25px;" width="10" height="6" viewBox="0 0 10 6" fill="none"><path d="M1 1 L5 5 L9 1" stroke="#555" stroke-width="1.1"/></svg>
<div class="a" style="left:973.5px;top:216px;width:213px;height:24.5px;border:1px solid #d6d6d6;border-radius:3px;box-sizing:border-box;background:#fff;"></div>
<div class="t" style="left:981px;top:223.79px;font-size:11px;line-height:11px;color:#333;-webkit-text-stroke:0.15px currentColor;letter-spacing:-0.1px;">Pending</div>
<svg class="a" style="left:1164.5px;top:225.25px;" width="10" height="6" viewBox="0 0 10 6" fill="none"><path d="M1 1 L5 5 L9 1" stroke="#555" stroke-width="1.1"/></svg>
<div class="t" style="left:760.8px;top:277.44px;font-size:12px;line-height:12px;color:#5b9de6;-webkit-text-stroke:0.42px currentColor;letter-spacing:-0.05px;">Question Feedback</div>
<div class="t" style="left:890px;top:277.44px;font-size:12px;line-height:12px;color:#333;-webkit-text-stroke:0.42px currentColor;letter-spacing:0.1px;">Comments</div>
<div class="a" style="left:949.4px;top:277.7px;width:5.2px;height:5.2px;background:#f00;border-radius:50%;"></div>
<div class="t" style="left:974.5px;top:277.44px;font-size:12px;line-height:12px;color:#333;-webkit-text-stroke:0.42px currentColor;letter-spacing:0.05px;">Similar Questions</div>
<svg class="a" style="left:1072.8px;top:277.8px;" width="10.6" height="10.6" viewBox="0 0 10 10" fill="none"><circle cx="5" cy="5" r="4.2" stroke="#555" stroke-width="0.9"/><path d="M5 4.2 V7.6" stroke="#555" stroke-width="1"/><circle cx="5" cy="2.7" r="0.6" fill="#555"/></svg>
<div class="t" style="left:1100px;top:277.44px;font-size:12px;line-height:12px;color:#333;-webkit-text-stroke:0.42px currentColor;letter-spacing:-0.1px;">Words</div>
<div class="a" style="left:1135.9px;top:277.6px;width:5.2px;height:5.2px;background:#f00;border-radius:50%;"></div>
<div class="a" style="left:748px;top:295px;width:712.5px;height:1px;background:#d9d9d9;"></div>
<div class="a" style="left:748px;top:294px;width:129.5px;height:2px;background:#4a9bde;"></div>
<div class="a" style="left:748.3px;top:308.2px;width:121.2px;height:23.4px;background:#f3f7fc;border:1px solid #dcdcdc;border-radius:3px;box-sizing:border-box;"></div>
<svg class="a" style="left:769.5px;top:314.5px;" width="10" height="11" viewBox="0 0 10 11" fill="none"><path d="M0.3 4.8 L4.9 0.7 C5.6 0.5 6 1 5.9 1.7 L5.6 3.2 L7.9 3.4 C8.9 3.6 9.3 4.4 9.1 5.4 L8.3 8.9 C8 9.9 7.1 10.4 6.1 10.3 C4.6 10.1 3.2 9.9 0.2 9.2" stroke="#444" stroke-width="0.95" stroke-linecap="round" stroke-linejoin="round"/></svg>
<div class="t" style="left:782px;top:315.36px;font-size:9.5px;line-height:9.5px;color:#444;-webkit-text-stroke:0.15px currentColor;">1</div>
<svg class="a" style="left:801px;top:314.5px;" width="10" height="11" viewBox="0 0 10 11" fill="none"><path transform="rotate(180 4.7 5.5)" d="M0.3 4.8 L4.9 0.7 C5.6 0.5 6 1 5.9 1.7 L5.6 3.2 L7.9 3.4 C8.9 3.6 9.3 4.4 9.1 5.4 L8.3 8.9 C8 9.9 7.1 10.4 6.1 10.3 C4.6 10.1 3.2 9.9 0.2 9.2" stroke="#444" stroke-width="0.95" stroke-linecap="round" stroke-linejoin="round"/></svg>
<div class="t" style="left:813px;top:315.36px;font-size:9.5px;line-height:9.5px;color:#444;-webkit-text-stroke:0.15px currentColor;">4</div>
<svg class="a" style="left:831px;top:314.3px;" width="10.5" height="10.5" viewBox="0 0 11 11" fill="none"><path d="M7.6 1.9 A4.4 4.4 0 1 0 9.5 5.2" stroke="#444" stroke-width="1.0"/><path d="M10.5 1.8 V4.5 H8 Z" fill="#444" stroke="#444" stroke-width="0.4" stroke-linejoin="round"/></svg>
<div class="t" style="left:844.3px;top:315.36px;font-size:9.5px;line-height:9.5px;color:#444;-webkit-text-stroke:0.15px currentColor;">1</div>
<div class="a" style="left:1223px;top:308.3px;width:115.6px;height:23.4px;border:1px solid #d6d6d6;border-radius:3px;box-sizing:border-box;background:#fff;"></div>
<div class="t" style="left:1231px;top:314.99px;font-size:11px;line-height:11px;color:#333;-webkit-text-stroke:0.15px currentColor;letter-spacing:-0.1px;">All Feedback</div>
<svg class="a" style="left:1317.5px;top:317.0px;" width="10" height="6" viewBox="0 0 10 6" fill="none"><path d="M1 1 L5 5 L9 1" stroke="#555" stroke-width="1.1"/></svg>
<div class="a" style="left:1345px;top:308.3px;width:115.6px;height:23.4px;border:1px solid #d6d6d6;border-radius:3px;box-sizing:border-box;background:#fff;"></div>
<div class="t" style="left:1352.5px;top:314.99px;font-size:11px;line-height:11px;color:#333;-webkit-text-stroke:0.15px currentColor;letter-spacing:-0.1px;">User</div>
<svg class="a" style="left:1439px;top:317.0px;" width="10" height="6" viewBox="0 0 10 6" fill="none"><path d="M1 1 L5 5 L9 1" stroke="#555" stroke-width="1.1"/></svg>
<div class="t" style="left:755.9px;top:348.89px;font-size:11px;line-height:11px;color:#333;-webkit-text-stroke:0.42px currentColor;letter-spacing:-0.2px;">Last Accessed On</div>
<div class="t" style="left:863.3px;top:348.89px;font-size:11px;line-height:11px;color:#333;-webkit-text-stroke:0.42px currentColor;letter-spacing:-0.3px;">Feedback By</div>
<div class="t" style="left:985.3px;top:348.89px;font-size:11px;line-height:11px;color:#333;-webkit-text-stroke:0.42px currentColor;letter-spacing:-0.1px;">Type</div>
<div class="t" style="left:1040px;top:348.89px;font-size:11px;line-height:11px;color:#333;-webkit-text-stroke:0.42px currentColor;letter-spacing:-0.15px;">Feedback</div>
<div class="a" style="left:748px;top:368px;width:712.5px;height:1px;background:#d9d9d9;"></div>
<div class="t" style="left:756.3px;top:379.19px;font-size:11px;line-height:11px;color:#333;-webkit-text-stroke:0.15px currentColor;letter-spacing:-0.2px;">Today 10:30 AM</div>
<div class="t" style="left:863.3px;top:379.19px;font-size:11px;line-height:11px;color:#333;-webkit-text-stroke:0.15px currentColor;letter-spacing:-0.15px;">Yuvaraj Mani</div>
<svg class="a" style="left:985px;top:378.8px;" width="10" height="11" viewBox="0 0 10 11" fill="none"><path d="M0.3 4.8 L4.9 0.7 C5.6 0.5 6 1 5.9 1.7 L5.6 3.2 L7.9 3.4 C8.9 3.6 9.3 4.4 9.1 5.4 L8.3 8.9 C8 9.9 7.1 10.4 6.1 10.3 C4.6 10.1 3.2 9.9 0.2 9.2" stroke="#444" stroke-width="0.95" stroke-linecap="round" stroke-linejoin="round"/></svg>
<div class="t" style="left:997.6px;top:379.19px;font-size:11px;line-height:11px;color:#333;-webkit-text-stroke:0.15px currentColor;letter-spacing:-0.1px;">User</div>
<div class="a" style="left:748px;top:398px;width:712.5px;height:1px;background:#d9d9d9;"></div>
<div class="t" style="left:756.3px;top:412.89px;font-size:11px;line-height:11px;color:#333;-webkit-text-stroke:0.15px currentColor;letter-spacing:-0.2px;">Today 10:30 AM</div>
<div class="t" style="left:863.3px;top:412.89px;font-size:11px;line-height:11px;color:#333;-webkit-text-stroke:0.15px currentColor;letter-spacing:-0.15px;">Yuvaraj Mani</div>
<svg class="a" style="left:985px;top:412.5px;" width="10" height="11" viewBox="0 0 10 11" fill="none"><path d="M0.3 4.8 L4.9 0.7 C5.6 0.5 6 1 5.9 1.7 L5.6 3.2 L7.9 3.4 C8.9 3.6 9.3 4.4 9.1 5.4 L8.3 8.9 C8 9.9 7.1 10.4 6.1 10.3 C4.6 10.1 3.2 9.9 0.2 9.2" stroke="#444" stroke-width="0.95" stroke-linecap="round" stroke-linejoin="round"/></svg>
<div class="t" style="left:997.6px;top:412.89px;font-size:11px;line-height:11px;color:#333;-webkit-text-stroke:0.15px currentColor;letter-spacing:-0.1px;">User</div>
<div class="t" style="left:1039.7px;top:412.89px;font-size:11px;line-height:11px;color:#333;-webkit-text-stroke:0.15px currentColor;letter-spacing:-0.12px;">meter means water meter</div>
<div class="a" style="left:1436px;top:405.3px;width:24.4px;height:24.2px;border:1px solid #d9d9d9;border-radius:4px;box-sizing:border-box;background:#fff;"></div>
<svg class="a" style="left:1443.7px;top:412.90000000000003px;" width="9" height="9" viewBox="0 0 9 9" fill="none"><path d="M3.6 0.7 H0.7 V8.3 H8.3 V5.4" stroke="#555" stroke-width="1.25"/><path d="M4.2 4.8 L8 1 M5.2 0.7 H8.3 V3.8" stroke="#555" stroke-width="1.25"/></svg>
<div class="a" style="left:1038.2px;top:434.4px;width:12px;height:12px;background:#b5b5b5;border-radius:2px;"></div>
<svg class="a" style="left:1038.2px;top:434.4px;" width="12" height="12" viewBox="0 0 12 12" fill="none"><path d="M3 6.2 L5 8.2 L9.2 3.8" stroke="#fff" stroke-width="1.3"/></svg>
<div class="t" style="left:1053.6px;top:435.39px;font-size:11px;line-height:11px;color:#8a8a8a;-webkit-text-stroke:0.15px currentColor;letter-spacing:-0.2px;">My question was not understood - no results were generated</div>
<div class="a" style="left:1038.2px;top:451.2px;width:12px;height:12px;background:#b5b5b5;border-radius:2px;"></div>
<svg class="a" style="left:1038.2px;top:451.2px;" width="12" height="12" viewBox="0 0 12 12" fill="none"><path d="M3 6.2 L5 8.2 L9.2 3.8" stroke="#fff" stroke-width="1.3"/></svg>
<div class="t" style="left:1053.6px;top:452.19px;font-size:11px;line-height:11px;color:#8a8a8a;-webkit-text-stroke:0.15px currentColor;letter-spacing:-0.2px;">The response took a long time to generate - more than 10 seconds</div>
<div class="a" style="left:1038px;top:471.0px;width:392px;height:23.6px;background:#f4f8fc;border:1px solid #e6ebf0;border-radius:3px;box-sizing:border-box;"></div>
<div class="t" style="left:1045.7px;top:478.49px;font-size:11px;line-height:11px;color:#4a4a4a;-webkit-text-stroke:0.15px currentColor;font-style:italic;letter-spacing:-0.45px;">SELECT 10.id, t0.meterLocation FROM Meter 10 WHERE t0.material = “Brass”</div>
<div class="a" style="left:1436px;top:471.1px;width:24.4px;height:24.2px;border:1px solid #d9d9d9;border-radius:4px;box-sizing:border-box;background:#fff;"></div>
<svg class="a" style="left:1443.7px;top:478.70000000000005px;" width="9" height="9" viewBox="0 0 9 9" fill="none"><path d="M3.6 0.7 H0.7 V8.3 H8.3 V5.4" stroke="#555" stroke-width="1.25"/><path d="M4.2 4.8 L8 1 M5.2 0.7 H8.3 V3.8" stroke="#555" stroke-width="1.25"/></svg>
<div class="a" style="left:748px;top:503px;width:712.5px;height:1px;background:#d9d9d9;"></div>
<div class="t" style="left:756.3px;top:518.09px;font-size:11px;line-height:11px;color:#333;-webkit-text-stroke:0.15px currentColor;letter-spacing:-0.2px;">Yesterday 08:45 PM</div>
<div class="t" style="left:863.3px;top:518.09px;font-size:11px;line-height:11px;color:#333;-webkit-text-stroke:0.15px currentColor;letter-spacing:-0.15px;">Yuvaraj Mani</div>
<svg class="a" style="left:985px;top:517.7px;" width="10" height="11" viewBox="0 0 10 11" fill="none"><path transform="rotate(180 4.7 5.5)" d="M0.3 4.8 L4.9 0.7 C5.6 0.5 6 1 5.9 1.7 L5.6 3.2 L7.9 3.4 C8.9 3.6 9.3 4.4 9.1 5.4 L8.3 8.9 C8 9.9 7.1 10.4 6.1 10.3 C4.6 10.1 3.2 9.9 0.2 9.2" stroke="#444" stroke-width="0.95" stroke-linecap="round" stroke-linejoin="round"/></svg>
<div class="t" style="left:997.6px;top:518.09px;font-size:11px;line-height:11px;color:#333;-webkit-text-stroke:0.15px currentColor;letter-spacing:-0.1px;">LLM</div>
<div class="t" style="left:1039.7px;top:518.09px;font-size:11px;line-height:11px;color:#333;-webkit-text-stroke:0.15px currentColor;letter-spacing:-0.12px;">filter by brass</div>
<div class="a" style="left:1436px;top:510.3px;width:24.4px;height:24.2px;border:1px solid #d9d9d9;border-radius:4px;box-sizing:border-box;background:#fff;"></div>
<svg class="a" style="left:1443.7px;top:517.9px;" width="9" height="9" viewBox="0 0 9 9" fill="none"><path d="M3.6 0.7 H0.7 V8.3 H8.3 V5.4" stroke="#555" stroke-width="1.25"/><path d="M4.2 4.8 L8 1 M5.2 0.7 H8.3 V3.8" stroke="#555" stroke-width="1.25"/></svg>
<div class="a" style="left:1038.2px;top:539.6px;width:12px;height:12px;background:#b5b5b5;border-radius:2px;"></div>
<svg class="a" style="left:1038.2px;top:539.6px;" width="12" height="12" viewBox="0 0 12 12" fill="none"><path d="M3 6.2 L5 8.2 L9.2 3.8" stroke="#fff" stroke-width="1.3"/></svg>
<div class="t" style="left:1053.6px;top:540.59px;font-size:11px;line-height:11px;color:#8a8a8a;-webkit-text-stroke:0.15px currentColor;letter-spacing:-0.2px;">Query has reserved SQL words, enclose them in double quotes</div>
<div class="a" style="left:1038.2px;top:556.2px;width:12px;height:12px;background:#b5b5b5;border-radius:2px;"></div>
<svg class="a" style="left:1038.2px;top:556.2px;" width="12" height="12" viewBox="0 0 12 12" fill="none"><path d="M3 6.2 L5 8.2 L9.2 3.8" stroke="#fff" stroke-width="1.3"/></svg>
<div class="t" style="left:1053.6px;top:557.19px;font-size:11px;line-height:11px;color:#8a8a8a;-webkit-text-stroke:0.15px currentColor;letter-spacing:-0.2px;">Use WITH clause for subqueries</div>
<div class="a" style="left:1038px;top:575.9000000000001px;width:392px;height:23.6px;background:#f4f8fc;border:1px solid #e6ebf0;border-radius:3px;box-sizing:border-box;"></div>
<div class="t" style="left:1045.7px;top:583.39px;font-size:11px;line-height:11px;color:#4a4a4a;-webkit-text-stroke:0.15px currentColor;font-style:italic;letter-spacing:-0.45px;">SELECT 10.id, t0.meterLocation FROM Meter 10 WHERE t0.material = “Brass”</div>
<div class="a" style="left:1436px;top:576.0px;width:24.4px;height:24.2px;border:1px solid #d9d9d9;border-radius:4px;box-sizing:border-box;background:#fff;"></div>
<svg class="a" style="left:1443.7px;top:583.6px;" width="9" height="9" viewBox="0 0 9 9" fill="none"><path d="M3.6 0.7 H0.7 V8.3 H8.3 V5.4" stroke="#555" stroke-width="1.25"/><path d="M4.2 4.8 L8 1 M5.2 0.7 H8.3 V3.8" stroke="#555" stroke-width="1.25"/></svg>
<div class="a" style="left:748px;top:608px;width:712.5px;height:1px;background:#d9d9d9;"></div>
<div class="t" style="left:756.3px;top:623.09px;font-size:11px;line-height:11px;color:#333;-webkit-text-stroke:0.15px currentColor;letter-spacing:-0.2px;">Yesterday 08:17 PM</div>
<div class="t" style="left:863.3px;top:623.09px;font-size:11px;line-height:11px;color:#333;-webkit-text-stroke:0.15px currentColor;letter-spacing:-0.15px;">Ravin Rao</div>
<svg class="a" style="left:985px;top:622.7px;" width="10" height="11" viewBox="0 0 10 11" fill="none"><path transform="rotate(180 4.7 5.5)" d="M0.3 4.8 L4.9 0.7 C5.6 0.5 6 1 5.9 1.7 L5.6 3.2 L7.9 3.4 C8.9 3.6 9.3 4.4 9.1 5.4 L8.3 8.9 C8 9.9 7.1 10.4 6.1 10.3 C4.6 10.1 3.2 9.9 0.2 9.2" stroke="#444" stroke-width="0.95" stroke-linecap="round" stroke-linejoin="round"/></svg>
<div class="t" style="left:997.6px;top:623.09px;font-size:11px;line-height:11px;color:#333;-webkit-text-stroke:0.15px currentColor;letter-spacing:-0.1px;">LLM</div>
<div class="t" style="left:1039.7px;top:623.09px;font-size:11px;line-height:11px;color:#333;-webkit-text-stroke:0.15px currentColor;letter-spacing:-0.12px;">blah</div>
<div class="a" style="left:1436px;top:615.3px;width:24.4px;height:24.2px;border:1px solid #d9d9d9;border-radius:4px;box-sizing:border-box;background:#fff;"></div>
<svg class="a" style="left:1443.7px;top:622.9px;" width="9" height="9" viewBox="0 0 9 9" fill="none"><path d="M3.6 0.7 H0.7 V8.3 H8.3 V5.4" stroke="#555" stroke-width="1.25"/><path d="M4.2 4.8 L8 1 M5.2 0.7 H8.3 V3.8" stroke="#555" stroke-width="1.25"/></svg>
<div class="a" style="left:1038.2px;top:644.6px;width:12px;height:12px;background:#b5b5b5;border-radius:2px;"></div>
<svg class="a" style="left:1038.2px;top:644.6px;" width="12" height="12" viewBox="0 0 12 12" fill="none"><path d="M3 6.2 L5 8.2 L9.2 3.8" stroke="#fff" stroke-width="1.3"/></svg>
<div class="t" style="left:1053.6px;top:645.59px;font-size:11px;line-height:11px;color:#8a8a8a;-webkit-text-stroke:0.15px currentColor;letter-spacing:-0.2px;">Query is using Topics / Properties which do not exist, use appropriate Topics or</div>
<div class="t" style="left:1053.6px;top:660.79px;font-size:11px;line-height:11px;color:#8a8a8a;-webkit-text-stroke:0.15px currentColor;letter-spacing:-0.2px;">Properties.</div>
<div class="a" style="left:1038px;top:679.7px;width:392px;height:23.6px;background:#f4f8fc;border:1px solid #e6ebf0;border-radius:3px;box-sizing:border-box;"></div>
<div class="t" style="left:1045.7px;top:687.19px;font-size:11px;line-height:11px;color:#4a4a4a;-webkit-text-stroke:0.15px currentColor;font-style:italic;letter-spacing:-0.45px;">SELECT 10.id, t0.meterLocation FROM Meter 10 WHERE t0.material = “Brass”</div>
<div class="a" style="left:1436px;top:679.8px;width:24.4px;height:24.2px;border:1px solid #d9d9d9;border-radius:4px;box-sizing:border-box;background:#fff;"></div>
<svg class="a" style="left:1443.7px;top:687.4px;" width="9" height="9" viewBox="0 0 9 9" fill="none"><path d="M3.6 0.7 H0.7 V8.3 H8.3 V5.4" stroke="#555" stroke-width="1.25"/><path d="M4.2 4.8 L8 1 M5.2 0.7 H8.3 V3.8" stroke="#555" stroke-width="1.25"/></svg>
<div class="a" style="left:748px;top:712px;width:712.5px;height:1px;background:#d9d9d9;"></div>
</div></body></html>
